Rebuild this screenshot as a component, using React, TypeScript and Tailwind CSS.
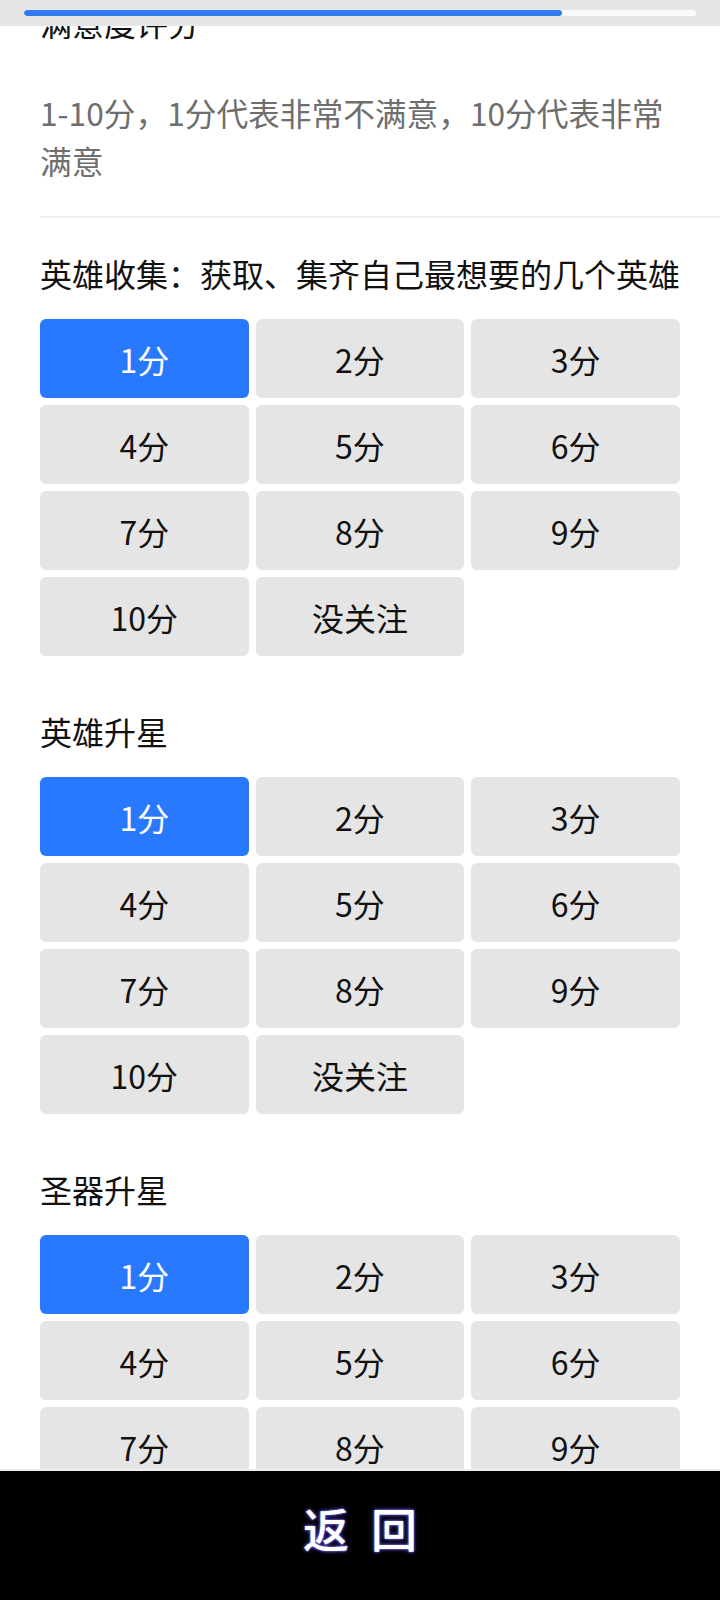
import { useState } from 'react';

const SCORES = ['1分', '2分', '3分', '4分', '5分', '6分', '7分', '8分', '9分', '10分', '没关注'];

const QUESTIONS = ['英雄收集：获取、集齐自己最想要的几个英雄', '英雄升星', '圣器升星'];

function ScoreGrid({ value, onChange }: { value: number; onChange: (i: number) => void }) {
  return (
    <div className="mt-[24px] grid grid-cols-3 gap-[7px]">
      {SCORES.map((label, i) => (
        <button
          key={label}
          type="button"
          onClick={() => onChange(i)}
          className={
            i === value
              ? 'flex h-[79px] items-center justify-center rounded-[6px] bg-[#2979ff] text-[32px] text-white'
              : 'flex h-[79px] items-center justify-center rounded-[6px] bg-[#e5e5e5] text-[32px] text-[#111]'
          }
        >
          {label}
        </button>
      ))}
    </div>
  );
}

export default function App() {
  const [answers, setAnswers] = useState<number[]>([0, 0, 0]);

  return (
    <div
      className="relative flex h-[1600px] w-[720px] flex-col overflow-hidden bg-white"
      style={{ fontFamily: '"Noto Sans CJK SC", "Noto Sans", sans-serif' }}
    >
      {/* scroll area; title sits partly under the progress header */}
      <main className="min-h-0 flex-1 overflow-hidden pl-[40px]">
        <div className="pr-[40px]">
          <h1 className="text-[32px] leading-[44px] text-[#111]">满意度评分</h1>
          <p className="mt-[44px] text-[31.7px] leading-[48px] text-[#6e6e6e]">
            1-10分，1分代表非常不满意，10分代表非常满意
          </p>
        </div>
        <div className="mt-[32px] h-[2px] bg-[#f0f0f0]" />
        <div className="pr-[40px]">
          {QUESTIONS.map((q, qi) => (
            <section key={q} className={qi === 0 ? 'mt-[33px]' : 'mt-[53px]'}>
              <h2 className="text-[32px] leading-[44px] text-[#111]">{q}</h2>
              <ScoreGrid
                value={answers[qi]}
                onChange={(i) => setAnswers((a) => a.map((v, k) => (k === qi ? i : v)))}
              />
            </section>
          ))}
        </div>
      </main>

      {/* progress header */}
      <div className="absolute inset-x-0 top-0 h-[26px] bg-[#e6e6e6] px-[24px] pt-[10px]">
        <div className="h-[6px] overflow-hidden rounded-full bg-[#fafafa]">
          <div className="h-full w-[538px] rounded-full bg-[#2f7cf6]" />
        </div>
      </div>

      {/* bottom bar */}
      <footer className="flex h-[131px] shrink-0 items-start justify-center border-t-[2px] border-[#eeeeee] bg-black pt-[26px]">
        <button
          type="button"
          className="flex gap-[22px] text-[46px] font-medium leading-[60px] text-white [text-shadow:0_0_2px_#9a8cff,0_0_4px_#5b4bff]"
        >
          <span>返</span>
          <span>回</span>
        </button>
      </footer>
    </div>
  );
}
